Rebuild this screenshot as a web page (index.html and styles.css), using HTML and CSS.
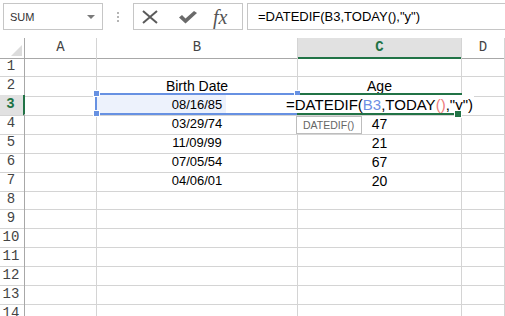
FILE: index.html
```
<!DOCTYPE html>
<html lang="en">
<head>
    <meta charset="UTF-8">
    <title>DATEDIF</title>
    <link rel="stylesheet" href="styles.css">
</head>
<body>
    <div class="toolbar">
        <div class="namebox">
            <span>SUM</span>
            <span class="caret"></span>
        </div>
        <div class="dots"><i></i><i></i><i></i></div>
        <div class="fxbox">
            <svg class="btn-x" width="18" height="14" viewBox="0 0 18 14">
                <path d="M2 1 L16 13 M16 1 L2 13" stroke="#5a5a5a" stroke-width="2" fill="none"/>
            </svg>
            <svg class="btn-ok" width="20" height="14" viewBox="0 0 20 14">
                <path d="M1 7.5 L4 5 L7.5 8.5 L16 1 L19 3 L7.5 13.5 Z" fill="#6a6a6a"/>
            </svg>
            <span class="fx">fx</span>
        </div>
        <div class="formula">=DATEDIF(B3,TODAY(),"y")</div>
    </div>

    <div class="sheet">
        <div class="row head">
            <div class="rh corner">
                <svg width="11" height="11" viewBox="0 0 11 11"><path d="M11 0 L11 11 L0 11 Z" fill="#dcdcdc"/></svg>
            </div>
            <div class="ch">A</div>
            <div class="ch">B</div>
            <div class="ch on">C</div>
            <div class="ch">D</div>
        </div>
        <div class="row"><div class="rh">1</div><div></div><div></div><div></div><div></div></div>
        <div class="row"><div class="rh">2</div><div></div><div class="txt">Birth Date</div><div class="txt">Age</div><div></div></div>
        <div class="row"><div class="rh on">3</div><div></div><div class="num ref">08/16/85</div><div></div><div></div></div>
        <div class="row"><div class="rh">4</div><div></div><div class="num">03/29/74</div><div class="txt">47</div><div></div></div>
        <div class="row"><div class="rh">5</div><div></div><div class="num">11/09/99</div><div class="txt">21</div><div></div></div>
        <div class="row"><div class="rh">6</div><div></div><div class="num">07/05/54</div><div class="txt">67</div><div></div></div>
        <div class="row"><div class="rh">7</div><div></div><div class="num">04/06/01</div><div class="txt">20</div><div></div></div>
        <div class="row"><div class="rh">8</div><div></div><div></div><div></div><div></div></div>
        <div class="row"><div class="rh">9</div><div></div><div></div><div></div><div></div></div>
        <div class="row"><div class="rh">10</div><div></div><div></div><div></div><div></div></div>
        <div class="row"><div class="rh">11</div><div></div><div></div><div></div><div></div></div>
        <div class="row"><div class="rh">12</div><div></div><div></div><div></div><div></div></div>
        <div class="row"><div class="rh">13</div><div></div><div></div><div></div><div></div></div>
        <div class="row"><div class="rh">14</div><div></div><div></div><div></div><div></div></div>

        <!-- overlays for the cell being edited -->
        <div class="ref-box"></div>
        <span class="handle h-tl"></span>
        <span class="handle h-bl"></span>
        <span class="handle h-tr"></span>
        <div class="editor">=DATEDIF(<span class="c-ref">B3</span>,TODAY<span class="c-par">()</span>,"y")</div>
        <div class="active-top"></div>
        <div class="active-bottom"></div>
        <span class="fill-handle"></span>
        <div class="tip">DATEDIF()</div>
    </div>
</body>
</html>
```

FILE: styles.css
```
body {
    margin: 0;
    background: #fff;
    font-family: "Liberation Sans", Arial, sans-serif;
    overflow: hidden;
    width: 505px;
    height: 316px;
}

/* formula bar */
.toolbar {
    display: flex;
    align-items: flex-start;
    height: 38px;
    padding-top: 3px;
    box-sizing: border-box;
}
.namebox {
    margin-left: 3px;
    width: 100px;
    height: 27px;
    border: 1px solid #c6c6c6;
    box-sizing: border-box;
    display: flex;
    align-items: center;
    justify-content: space-between;
    padding: 0 7px 0 6px;
    font-size: 11px;
    color: #333;
}
.caret {
    width: 0;
    height: 0;
    border-left: 4px solid transparent;
    border-right: 4px solid transparent;
    border-top: 4px solid #7a7a7a;
}
.dots {
    margin: 9px 14px 0;
    width: 2px;
    display: flex;
    flex-direction: column;
    gap: 2px;
}
.dots i {
    width: 2px;
    height: 2px;
    background: #b5b5b5;
}
.fxbox {
    width: 110px;
    height: 27px;
    border: 1px solid #c6c6c6;
    box-sizing: border-box;
    display: flex;
    align-items: center;
}
.btn-x {
    margin-left: 7px;
}
.btn-ok {
    margin-left: 19px;
}
.fx {
    margin-left: 15px;
    font-family: "Liberation Serif", serif;
    font-style: italic;
    font-size: 20px;
    color: #555;
    line-height: 20px;
}
.formula {
    margin-left: 4px;
    flex: 1;
    height: 27px;
    border: 1px solid #c6c6c6;
    border-right: none;
    box-sizing: border-box;
    padding-left: 10px;
    font-size: 13px;
    line-height: 25px;
    color: #000;
}

/* grid */
.sheet {
    position: relative;
}
.row {
    display: grid;
    grid-template-columns: 25px 72px 201px 164px 1fr;
    height: 19px;
}
.row > div {
    border-right: 1px solid #d4d4d4;
    border-bottom: 1px solid #d4d4d4;
    box-sizing: border-box;
    font-size: 14px;
    line-height: 20px;
    text-align: center;
    white-space: nowrap;
}
.row > .rh {
    border-right-color: #a8a8a8;
    font-family: "Liberation Mono", monospace;
    font-size: 14px;
    line-height: 19px;
    color: #444;
    text-align: center;
    padding-right: 2px;
}
.row > .rh.on {
    background: #e1e1e1;
    border-right: 2px solid #217346;
    color: #217346;
    font-weight: bold;
}
.head > div {
    border-bottom-color: #a8a8a8;
    font-family: "Liberation Mono", monospace;
    color: #444;
    line-height: 19px;
}
.head > .ch.on {
    background: #e1e1e1;
    border-bottom: 2px solid #217346;
    color: #217346;
    font-weight: bold;
}
.head > .corner {
    display: flex;
    align-items: flex-end;
    justify-content: flex-end;
    padding: 0 2px 2px 0;
}
.row > .num {
    font-size: 13px;
}
.row > .ref {
    background: linear-gradient(to right, #edf2fc 129px, #fff 129px);
}

/* edit overlays */
.ref-box {
    position: absolute;
    left: 95px;
    top: 55px;
    width: 203px;
    height: 22px;
    border: 2px solid #6791e2;
    box-sizing: border-box;
}
.handle {
    position: absolute;
    width: 5px;
    height: 5px;
    background: #6791e2;
    outline: 1px solid #fff;
}
.h-tl { left: 94px; top: 53px; }
.h-bl { left: 94px; top: 73px; }
.h-tr { left: 295px; top: 53px; }
.editor {
    position: absolute;
    left: 226px;
    top: 57px;
    width: 248px;
    height: 18px;
    background: #fff;
    box-sizing: border-box;
    padding-left: 60px;
    font-size: 15px;
    line-height: 20px;
    white-space: nowrap;
    color: #000;
}
.c-ref { color: #6d8fe4; }
.c-par { color: #ee7b7b; }
.active-top {
    position: absolute;
    left: 300px;
    top: 55px;
    width: 162px;
    height: 2px;
    background: #217346;
}
.active-bottom {
    position: absolute;
    left: 297px;
    top: 75px;
    width: 158px;
    height: 2px;
    background: #217346;
}
.fill-handle {
    position: absolute;
    left: 455px;
    top: 73px;
    width: 6px;
    height: 6px;
    background: #217346;
    outline: 1px solid #fff;
}
.tip {
    position: absolute;
    left: 296px;
    top: 78px;
    width: 66px;
    height: 18px;
    background: #fff;
    border: 1px solid #bdbdbd;
    box-sizing: border-box;
    font-size: 10.5px;
    line-height: 16px;
    color: #666;
    padding-left: 6px;
}
```
